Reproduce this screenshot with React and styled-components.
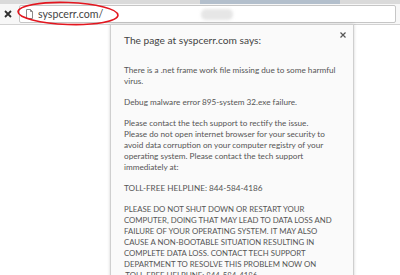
import styled, { createGlobalStyle } from "styled-components";

const Global = createGlobalStyle`
    html, body {
        margin: 0;
        padding: 0;
        background: #ffffff;
        overflow: hidden;
    }
    body {
        font-family: Lato, "Liberation Sans", sans-serif;
    }
`;

const Screen = styled.div`
    position: relative;
    width: 400px;
    height: 275px;
    overflow: hidden;
    background: #ffffff;
`;

const TabStrip = styled.div`
    display: flex;
    height: 4px;
    background: #dadada;
`;

const TabEdge = styled.div`
    margin-left: ${(p) => p.left}px;
    width: ${(p) => p.width}px;
    background: #b3bfcc;
`;

const Toolbar = styled.div`
    display: flex;
    align-items: center;
    height: 20px;
    padding-left: 4px;
    background: #f7f7f7;
    border-bottom: 1px solid #d2d2d2;
`;

const StopButton = styled.div`
    display: flex;
    width: 8px;
    height: 8px;
    margin-right: 7px;
`;

const Omnibox = styled.div`
    flex: 1;
    display: flex;
    align-items: center;
    height: 18px;
    margin-right: 4px;
    padding-left: 6px;
    background: #ffffff;
    border: 1px solid #c6c6c6;
    border-radius: 2px;
    box-sizing: border-box;
`;

const PageIcon = styled.div`
    display: flex;
    width: 7px;
    height: 10px;
    margin-right: 5px;
`;

const Url = styled.span`
    font-size: 10.6px;
    color: #444;
`;

const Blurred = styled.span`
    width: 32px;
    height: 11px;
    margin-left: 98px;
    border-radius: 5px;
    background: #e6e6e6;
    filter: blur(1.5px);
`;

const Marker = styled.svg`
    position: absolute;
    left: 16px;
    top: 1px;
    pointer-events: none;
`;

const Page = styled.div`
    position: relative;
    height: 250px;
`;

const Dialog = styled.div`
    position: absolute;
    left: 110px;
    top: -1px;
    width: 244px;
    height: 270px;
    box-sizing: border-box;
    padding: 8px 12px 0 13px;
    background: #fafafa;
    border: 1px solid #cfcfcf;
    box-shadow: 0 0 3px rgba(0, 0, 0, 0.18);
`;

const Close = styled.div`
    position: absolute;
    right: 7px;
    top: 7px;
    display: flex;
    width: 6px;
    height: 6px;
`;

const Title = styled.div`
    font-size: 10.2px;
    line-height: 14px;
    font-weight: 400;
    color: #444;
    margin-bottom: 18px;
`;

const Message = styled.p`
    margin: 0 0 10px;
    font-size: ${(p) => (p.caps ? "7.8px" : "8.2px")};
    line-height: 11px;
    color: #555;
    white-space: pre-line;
`;

const paragraphs = [
    "There is a .net frame work file missing due to some harmful virus.",
    "Debug malware error 895-system 32.exe failure.",
    "Please contact the tech support to rectify the issue.\nPlease do not open internet browser for your security to avoid data corruption on your computer registry of your operating system. Please contact the tech support immediately at:",
    "TOLL-FREE HELPLINE: 844-584-4186",
    "PLEASE DO NOT SHUT DOWN OR RESTART YOUR COMPUTER, DOING THAT MAY LEAD TO DATA LOSS AND FAILURE OF YOUR OPERATING SYSTEM. IT MAY ALSO CAUSE A NON-BOOTABLE SITUATION RESULTING IN COMPLETE DATA LOSS. CONTACT TECH SUPPORT DEPARTMENT TO RESOLVE THIS PROBLEM NOW ON\n.TOLL-FREE HELPLINE: 844-584-4186",
];

function App() {
    return (
        <Screen>
            <Global />
            <TabStrip>
                <TabEdge left={200} width={140} />
            </TabStrip>
            <Toolbar>
                <StopButton>
                    <svg width="8" height="8" viewBox="0 0 8 8">
                        <path d="M1 1 L7 7 M7 1 L1 7" stroke="#2f2f2f" strokeWidth="1.8" />
                    </svg>
                </StopButton>
                <Omnibox>
                    <PageIcon>
                        <svg width="7" height="10" viewBox="0 0 7 10">
                            <path
                                d="M0.5 0.5 H4.5 L6.5 2.5 V9.5 H0.5 Z M4.5 0.5 V2.5 H6.5"
                                fill="none"
                                stroke="#8a8a8a"
                                strokeWidth="1"
                            />
                        </svg>
                    </PageIcon>
                    <Url>syspcerr.com/</Url>
                    <Blurred />
                </Omnibox>
            </Toolbar>
            <Marker width="106" height="26" viewBox="0 0 106 26">
                <ellipse
                    cx="52"
                    cy="12.5"
                    rx="50"
                    ry="11"
                    fill="none"
                    stroke="#e3161f"
                    strokeWidth="1.6"
                    transform="rotate(2 52 12.5)"
                />
            </Marker>
            <Page>
                <Dialog>
                    <Close>
                        <svg width="6" height="6" viewBox="0 0 6 6">
                            <path d="M0.5 0.5 L5.5 5.5 M5.5 0.5 L0.5 5.5" stroke="#555" strokeWidth="1.2" />
                        </svg>
                    </Close>
                    <Title>The page at syspcerr.com says:</Title>
                    {paragraphs.map((text, idx) => (
                        <Message key={idx} caps={idx === 4}>
                            {text}
                        </Message>
                    ))}
                </Dialog>
            </Page>
        </Screen>
    );
}

export default App;
